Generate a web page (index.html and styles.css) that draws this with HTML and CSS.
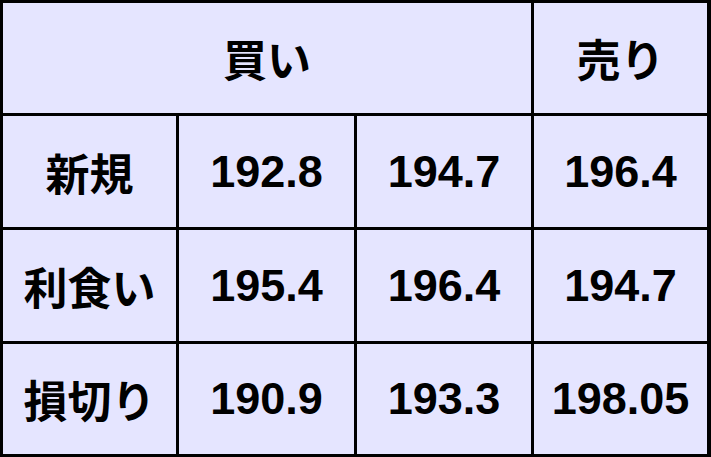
FILE: index.html
```html
<!DOCTYPE html>
<html lang="ja">
<head>
<meta charset="utf-8">
<link rel="stylesheet" href="styles.css">
</head>
<body>
<div class="grid">
  <div class="cell head span3">買い</div>
  <div class="cell head">売り</div>
  <div class="cell label">新規</div>
  <div class="cell num">192.8</div>
  <div class="cell num">194.7</div>
  <div class="cell num">196.4</div>
  <div class="cell label">利食い</div>
  <div class="cell num">195.4</div>
  <div class="cell num">196.4</div>
  <div class="cell num">194.7</div>
  <div class="cell label">損切り</div>
  <div class="cell num">190.9</div>
  <div class="cell num">193.3</div>
  <div class="cell num">198.05</div>
</div>
</body>
</html>
```
FILE: styles.css
```css
html, body {
  margin: 0;
  padding: 0;
  background: #ffffff;
}
.grid {
  box-sizing: border-box;
  width: 711px;
  height: 457px;
  background: #000000;
  padding: 3px 4px 3px 3px;
  display: grid;
  grid-template-columns: 173px 175px 174px 173px;
  grid-template-rows: 110px 111px 111px 110px;
  gap: 3px;
}
.cell {
  background: #e5e5ff;
  display: flex;
  align-items: center;
  justify-content: center;
  color: #000000;
}
.span3 {
  grid-column: span 3;
}
.head, .label {
  font-family: "Noto Sans CJK JP", sans-serif;
  font-weight: 700;
  font-size: 44px;
}
.num {
  font-family: "Liberation Sans", Arial, sans-serif;
  font-weight: 700;
  font-size: 45px;
}
```
